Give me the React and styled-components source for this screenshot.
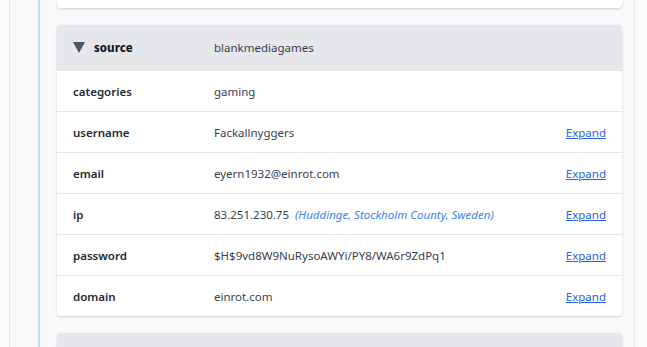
import React from "react";
import styled, { createGlobalStyle } from "styled-components";

const GlobalStyle = createGlobalStyle`
  html, body {
    margin: 0;
    padding: 0;
    background: #fbfbfc;
    font-family: "Noto Sans", "Open Sans", sans-serif;
    overflow: hidden;
  }
`;

const Page = styled.div`
  height: 347px;
  padding-left: 9px;
  padding-right: 12px;
  background: #fbfbfc;
  overflow: hidden;
`;

const Panel = styled.div`
  height: 100%;
  box-sizing: border-box;
  border-left: 1px solid #e5e7eb;
  border-right: 1px solid #e5e7eb;
  background: #f8f9fb;
  padding-left: 28px;
  padding-right: 12px;
`;

const Item = styled.div`
  border-left: 2px solid #bfdbfe;
  padding-left: 17px;
  padding-bottom: 17px;
`;

const Card = styled.div`
  background: #ffffff;
  border-radius: ${({ $cut }) => ($cut ? "0 0 4px 4px" : "4px")};
  height: ${({ $cut }) => ($cut ? "8px" : "auto")};
  box-shadow: 0 1px 3px rgba(0, 0, 0, 0.12), 0 1px 2px rgba(0, 0, 0, 0.06);
  overflow: hidden;
`;

const Header = styled.div`
  display: flex;
  align-items: center;
  height: 45px;
  background: #e5e7eb;
  padding-left: 16px;
  font-size: 11.5px;
  color: #374151;
`;

const Row = styled.div`
  display: flex;
  align-items: center;
  height: 40px;
  border-top: 1px solid #e5e7eb;
  padding-left: 16px;
  padding-right: 16px;
  font-size: 11.5px;
`;

const Label = styled.div`
  width: 141px;
  flex-shrink: 0;
  font-weight: ${({ $strong }) => ($strong ? 800 : 600)};
  color: ${({ $strong }) => ($strong ? "#111827" : "#1f2937")};
  display: flex;
  align-items: center;
  gap: 9px;
`;

const Value = styled.div`
  flex: 1;
  color: #374151;
  white-space: nowrap;
`;

const Geo = styled.span`
  margin-left: 6px;
  font-style: italic;
  color: #3b82f6;
`;

const ExpandLink = styled.a`
  color: #2563eb;
  text-decoration: underline;
  cursor: pointer;
`;

const Triangle = styled.span`
  width: 0;
  height: 0;
  border-left: 6px solid transparent;
  border-right: 6px solid transparent;
  border-top: 11px solid #4b5563;
`;

const rows = [
  { label: "categories", value: "gaming" },
  { label: "username", value: "Fackallnyggers", expand: true },
  { label: "email", value: "eyern1932@einrot.com", expand: true },
  {
    label: "ip",
    value: "83.251.230.75",
    geo: "(Huddinge, Stockholm County, Sweden)",
    expand: true,
  },
  {
    label: "password",
    value: "$H$9vd8W9NuRysoAWYi/PY8/WA6r9ZdPq1",
    expand: true,
  },
  { label: "domain", value: "einrot.com", expand: true },
];

const App = () => {
  return (
    <>
      <GlobalStyle />
      <Page>
        <Panel>
          <Item>
            <Card $cut />
          </Item>
          <Item>
            <Card>
              <Header>
                <Label $strong>
                  <Triangle />
                  source
                </Label>
                <Value>blankmediagames</Value>
              </Header>
              {rows.map((r) => (
                <Row key={r.label}>
                  <Label>{r.label}</Label>
                  <Value>
                    {r.value}
                    {r.geo && <Geo>{r.geo}</Geo>}
                  </Value>
                  {r.expand && <ExpandLink>Expand</ExpandLink>}
                </Row>
              ))}
            </Card>
          </Item>
          <Item>
            <Card>
              <Header />
            </Card>
          </Item>
        </Panel>
      </Page>
    </>
  );
};

export default App;
